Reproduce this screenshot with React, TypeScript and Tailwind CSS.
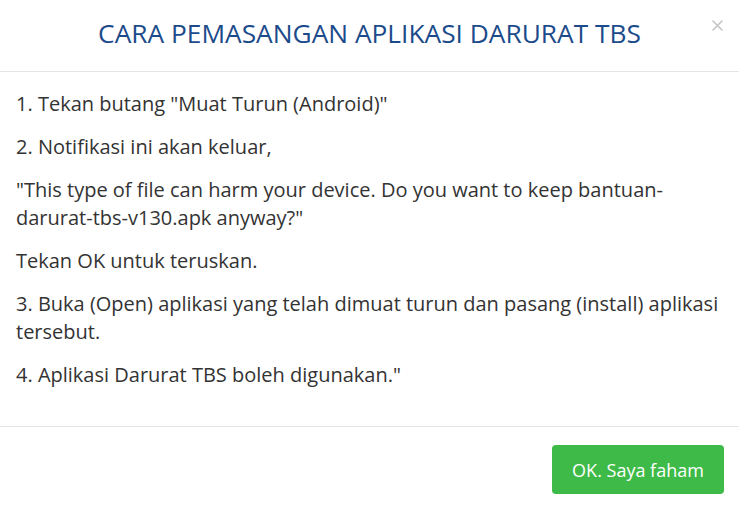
import React from "react";

export default function App() {
  return (
    <div className="w-[739px] h-[509px] bg-white text-[#333333] overflow-hidden" style={{ fontFamily: '"Open Sans", "Liberation Sans", sans-serif' }}>
      <div className="relative h-[72px] border-b border-[#e5e5e5] flex items-start justify-center">
        <h4 className="pt-[15px] text-[26.3px] leading-[36px] text-[#1c4b8b] font-normal">CARA PEMASANGAN APLIKASI DARURAT TBS</h4>
        <button className="absolute right-[16px] top-[19px] w-[12px] h-[12px] flex items-center justify-center" aria-label="Close">
          <svg width="11" height="11" viewBox="0 0 11 11">
            <path d="M1 1 L10 10 M10 1 L1 10" stroke="#c4c4c4" strokeWidth="1.6" strokeLinecap="round" />
          </svg>
        </button>
      </div>
      <div className="pt-[18px] pb-[21px] px-[16px] h-[354px] text-[20px] leading-[28px]">
        <p className="mb-[15px]">1. Tekan butang "Muat Turun (Android)"</p>
        <p className="mb-[15px]">2. Notifikasi ini akan keluar,</p>
        <p className="mb-[15px]">"This type of file can harm your device. Do you want to keep bantuan-darurat-tbs-v130.apk anyway?"</p>
        <p className="mb-[15px]">Tekan OK untuk teruskan.</p>
        <p className="mb-[15px]">3. Buka (Open) aplikasi yang telah dimuat turun dan pasang (install) aplikasi tersebut.</p>
        <p className="mb-[15px]">4. Aplikasi Darurat TBS boleh digunakan."</p>
      </div>
      <div className="border-t border-[#e5e5e5] flex justify-end pt-[18px] pr-[15px]">
        <button className="w-[172px] h-[49px] rounded-[4px] bg-[#3dba47] text-white text-[18px] leading-[28px]">OK. Saya faham</button>
      </div>
    </div>
  );
}
